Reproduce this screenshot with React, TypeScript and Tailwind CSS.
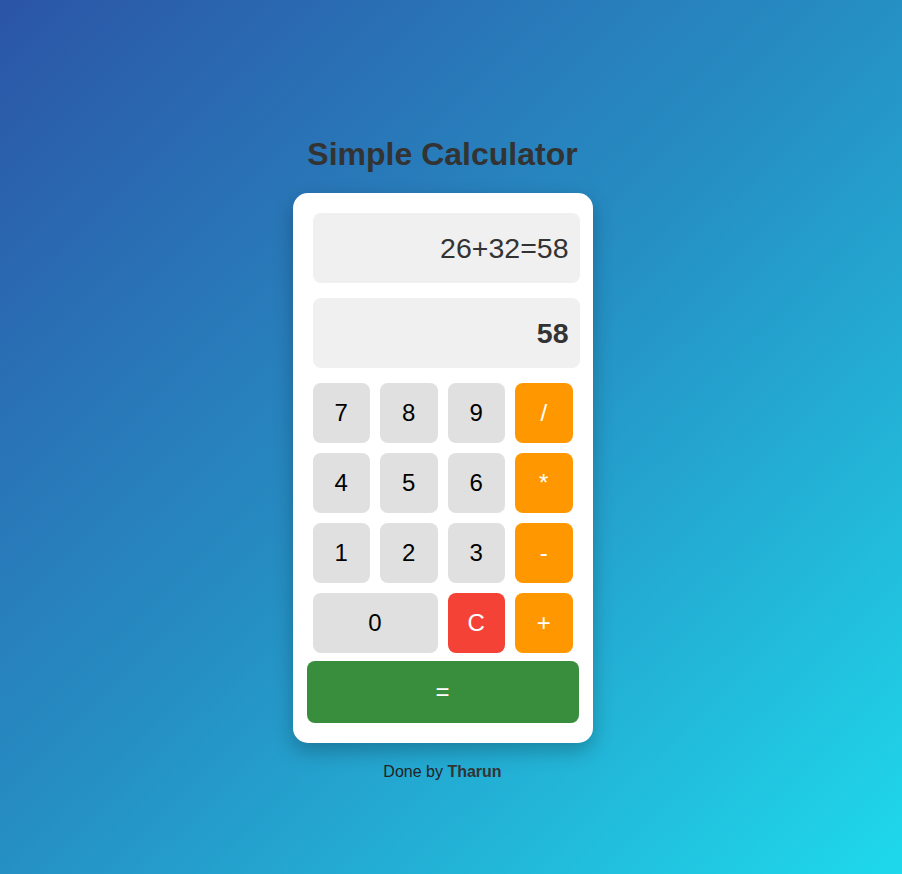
import React from 'react';

const keys: { label: string; kind: 'num' | 'op' | 'clear'; wide?: boolean }[] = [
  { label: '7', kind: 'num' },
  { label: '8', kind: 'num' },
  { label: '9', kind: 'num' },
  { label: '/', kind: 'op' },
  { label: '4', kind: 'num' },
  { label: '5', kind: 'num' },
  { label: '6', kind: 'num' },
  { label: '*', kind: 'op' },
  { label: '1', kind: 'num' },
  { label: '2', kind: 'num' },
  { label: '3', kind: 'num' },
  { label: '-', kind: 'op' },
  { label: '0', kind: 'num', wide: true },
  { label: 'C', kind: 'clear' },
  { label: '+', kind: 'op' },
];

const keyStyle = {
  num: 'bg-[#e0e0e0] text-black',
  op: 'bg-[#ff9800] text-white',
  clear: 'bg-[#f44336] text-white',
};

export default function App() {
  return (
    <div
      className="flex min-h-screen flex-col items-center bg-gradient-to-br from-[#2b55a7] via-[#2590c4] to-[#1ed9eb] pt-[136px] pr-[17px]"
      style={{ fontFamily: '"Liberation Sans", Arial, sans-serif' }}
    >
      <h1 className="text-[32px] leading-[37px] font-bold text-[#333]">Simple Calculator</h1>

      <div className="mt-[20px] w-[300px] rounded-[15px] bg-white p-[20px] shadow-[0_8px_20px_rgba(0,0,0,0.25)]">
        <div className="flex h-[70px] w-[267px] items-center justify-end rounded-[8px] bg-[#f0f0f0] px-[11px] text-[28.5px] text-[#333]">
          26+32=58
        </div>
        <div className="mt-[15px] flex h-[70px] w-[267px] items-center justify-end rounded-[8px] bg-[#f0f0f0] px-[11px] text-[28.5px] font-bold text-[#333]">
          58
        </div>

        {/* keypad */}
        <div className="mt-[15px] grid grid-cols-4 gap-[10px]">
          {keys.map((k) => (
            <button
              key={k.label}
              className={`flex h-[60px] items-center justify-center rounded-[8px] text-[24px] ${keyStyle[k.kind]} ${
                k.wide ? 'col-span-2' : ''
              }`}
            >
              {k.label}
            </button>
          ))}
        </div>

        <button className="-ml-[6px] mt-[8px] flex h-[62px] w-[272px] items-center justify-center rounded-[8px] bg-[#388e3c] text-[24px] text-white">
          =
        </button>
      </div>

      <p className="mt-[17px] text-[16px] text-[#222]">
        Done by <span className="font-bold text-[#333]">Tharun</span>
      </p>
    </div>
  );
}
